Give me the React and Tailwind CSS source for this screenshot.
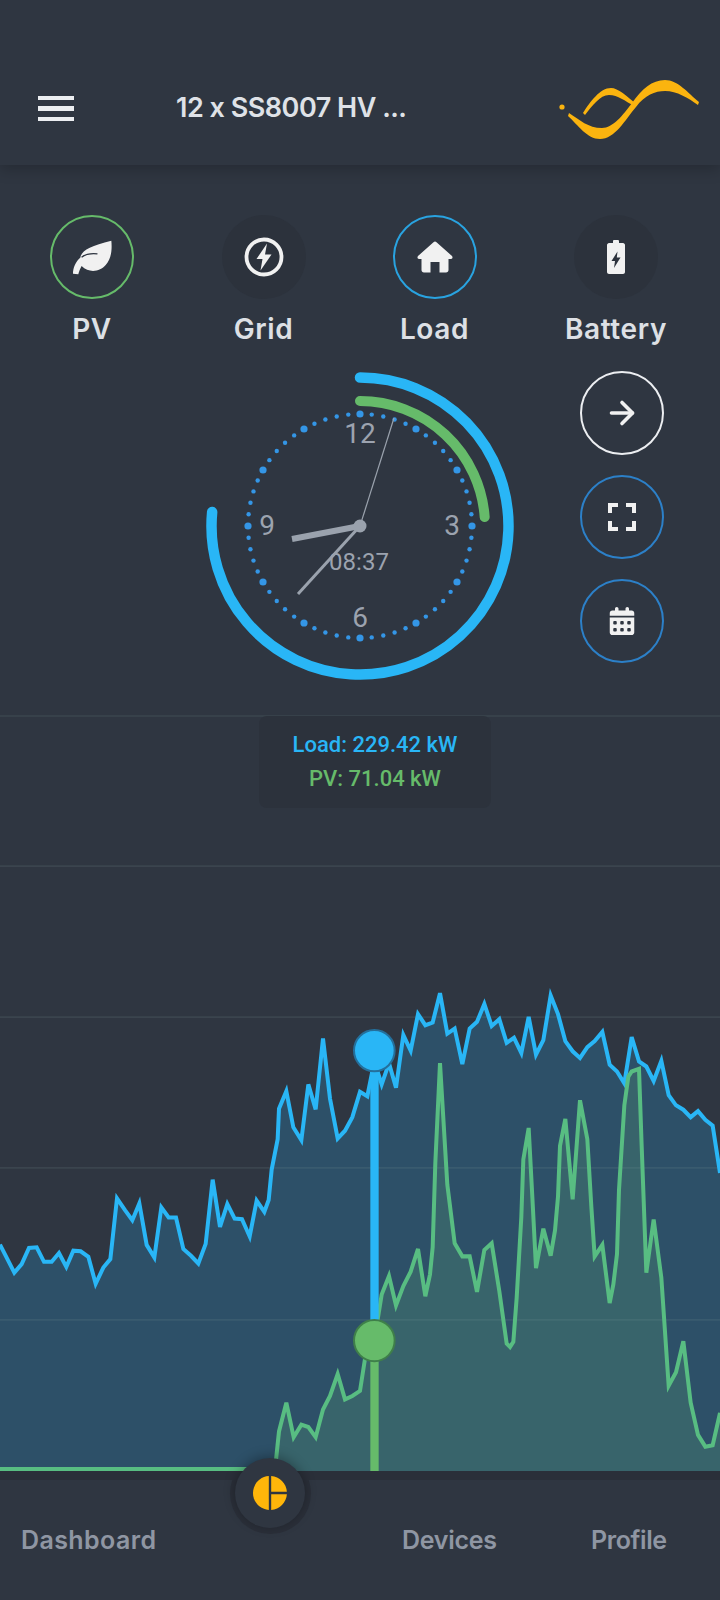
import React from "react";
import { ArrowRight } from "lucide-react";
import { FaCalendarDays } from "react-icons/fa6";

// points read off the reference, chart units are roughly 3x screen px
const blue = [[0,842],[43,925],[65,900],[87,852],[110,850],[132,893],[155,893],[177,867],[199,908],[220,860],[242,862],[265,878],[287,958],[310,910],[331,885],[351,705],[375,740],[397,770],[418,720],[440,843],[463,880],[484,732],[506,762],[528,762],[550,855],[573,875],[595,898],[617,840],[638,650],[660,790],[682,722],[704,765],[726,767],[749,818],[770,712],[793,745],[806,710],[815,620],[833,530],[837,440],[859,388],[880,495],[904,533],[925,368],[947,442],[969,232],[990,410],[1013,528],[1035,505],[1057,465],[1080,390],[1102,403],[1123,300],[1145,368],[1167,305],[1188,378],[1210,222],[1232,268],[1254,160],[1276,193],[1298,185],[1320,98],[1342,218],[1364,203],[1387,308],[1409,203],[1431,183],[1453,130],[1475,195],[1498,175],[1520,245],[1542,230],[1564,275],[1586,168],[1608,280],[1630,237],[1652,105],[1674,160],[1696,240],[1718,270],[1740,290],[1762,258],[1784,240],[1807,213],[1829,310],[1851,330],[1873,365],[1895,228],[1917,300],[1939,315],[1961,358],[1984,298],[2006,400],[2028,430],[2050,443],[2072,465],[2094,447],[2116,473],[2138,490],[2160,630]];

const green = [[0,1506],[825,1506],[829,1470],[837,1395],[859,1310],[881,1412],[904,1375],[925,1382],[947,1412],[969,1330],[990,1290],[1013,1225],[1035,1300],[1057,1290],[1080,1275],[1095,1180],[1123,1125],[1145,990],[1167,935],[1188,1022],[1210,965],[1232,922],[1254,855],[1276,995],[1290,930],[1298,850],[1306,600],[1320,305],[1342,665],[1364,838],[1387,877],[1409,877],[1431,982],[1453,858],[1475,838],[1498,980],[1520,1135],[1530,1145],[1540,1130],[1550,1000],[1564,760],[1570,590],[1586,497],[1598,720],[1608,912],[1630,795],[1652,875],[1665,800],[1674,700],[1680,550],[1696,470],[1718,708],[1740,415],[1762,530],[1774,730],[1784,877],[1807,843],[1829,1015],[1840,960],[1851,870],[1857,680],[1873,430],[1885,345],[1895,330],[1917,322],[1925,550],[1939,925],[1961,768],[1984,940],[2006,1260],[2028,1220],[2050,1128],[2072,1310],[2094,1405],[2116,1440],[2138,1436],[2160,1340]];

const toPoints = (pts) => pts.map((p) => p.join(",")).join(" ");
const toArea = (pts) => `${toPoints(pts)} 2160,1512 0,1512`;

const gridLines = [-722, -278, 169, 615, 1065];
const dots = Array.from({ length: 60 }, (_, i) => i * 6);

function polar(r, deg) {
  const a = (deg * Math.PI) / 180;
  return [360 + r * Math.sin(a), 526 - r * Math.cos(a)];
}

function arc(r, deg) {
  const [x, y] = polar(r, deg);
  return `M 360 ${526 - r} A ${r} ${r} 0 ${deg > 180 ? 1 : 0} 1 ${x} ${y}`;
}

function Clock() {
  return (
    <svg width="320" height="340" viewBox="200 356 320 340" className="block shrink-0">
      <path d={arc(148.5, 275.4)} fill="none" stroke="#29b6f6" strokeWidth="10.5" strokeLinecap="round" />
      <path d={arc(125, 85.9)} fill="none" stroke="#66bb6a" strokeWidth="10" strokeLinecap="round" />
      {dots.map((d) => {
        const [x, y] = polar(112, d);
        return <circle key={d} cx={x} cy={y} r={d % 30 === 0 ? 3.6 : 2.2} fill="#3496e6" />;
      })}
      <g fill="#9ca3af" fontFamily="Roboto, sans-serif" textAnchor="middle">
        <text x="360" y="443" fontSize="28">12</text>
        <text x="452" y="535" fontSize="28">3</text>
        <text x="267" y="535" fontSize="28">9</text>
        <text x="360" y="627" fontSize="28">6</text>
        <text x="359" y="570" fontSize="24">08:37</text>
      </g>
      <line x1="360" y1="526" x2="292" y2="539" stroke="#9aa2ad" strokeWidth="6" />
      <line x1="360" y1="526" x2="298" y2="594" stroke="#9aa2ad" strokeWidth="3" />
      <line x1="360" y1="526" x2="394" y2="418" stroke="#9aa2ad" strokeWidth="1.2" />
      <circle cx="360" cy="526" r="6.5" fill="#9aa2ad" />
    </svg>
  );
}

function Logo() {
  return (
    <svg width="180" height="100" viewBox="0 0 180 100" fill="#fbb40f" className="block">
      <circle cx="22" cy="47" r="2.6" />
      <path d="M29 53 C40 60 48 68 62 68 C73 68 83 55 92 43 C102 29 112 20 125 20 C138 20 148 33 159 42 L158 45 C148 38 137 31 125 31 C115 31 105 35 96 47 C85 60 75 79 60 79 C47 79 38 65 28 56 Z" />
      <path d="M43 53 C50 42 60 28 71 28 C78 28 87 36 96 44 L94 46 C85 41 78 35 69 35 C60 35 52 46 45 55 Z" />
    </svg>
  );
}

function Source({ label, ring, width, children }) {
  return (
    <div className={`flex flex-col items-center ${width}`}>
      <div className={`flex h-[84px] w-[84px] items-center justify-center rounded-full ${ring}`}>{children}</div>
      <div className="mt-[10px] text-[28px] leading-[40px] font-semibold tracking-[0.6px] text-[#dde0e5]">{label}</div>
    </div>
  );
}

function SideButton({ ring, children }) {
  return (
    <div className={`flex h-[84px] w-[84px] items-center justify-center rounded-full border-2 ${ring}`}>{children}</div>
  );
}

export default function App() {
  return (
    <div className="flex h-[1600px] w-[720px] flex-col overflow-hidden bg-[#2f3641] font-['Inter',sans-serif]">
      <header className="relative z-10 flex h-[165px] shrink-0 items-center justify-between bg-[#2f3641] pt-[52px] pl-[38px] shadow-[0_4px_14px_rgba(0,0,0,0.22)]">
        <div className="flex items-center">
          <div className="flex w-[36px] flex-col gap-[6px]">
            <div className="h-[4.5px] bg-[#eceef1]" />
            <div className="h-[4.5px] bg-[#eceef1]" />
            <div className="h-[4.5px] bg-[#eceef1]" />
          </div>
          <div className="ml-[102px] text-[27px] font-semibold tracking-[-0.5px] text-[#dfe2e7]">12 x SS8007 HV ...</div>
        </div>
        <div className="-mb-[2px]">
          <Logo />
        </div>
      </header>

      <div className="flex shrink-0 pt-[50px] pl-[6px]">
        <Source label="PV" width="w-[172px]" ring="border-2 border-[#66bb6a]">
          <svg width="43" height="38" viewBox="60 70 130 115">
            <path d="M182 78 C184 100 184 130 165 152 C148 172 115 178 92 155 C88 162 84 172 82 180 L66 178 C66 160 74 142 88 130 C92 105 120 95 182 78 Z" fill="#f1f1f1" />
            <path d="M92 128 C105 118 122 116 140 118" fill="none" stroke="#2f3641" strokeWidth="4" />
          </svg>
        </Source>
        <Source label="Grid" width="w-[171px]" ring="bg-[#2c323c]">
          <svg width="40" height="40" viewBox="0 0 40 40">
            <circle cx="20" cy="20" r="17.5" fill="none" stroke="#f1f1f1" strokeWidth="3.8" />
            <path d="M23 6.500 L12.500 22 H18.500 L16.500 33.500 L27.500 17.500 H21 Z" fill="#f1f1f1" />
          </svg>
        </Source>
        <Source label="Load" width="w-[171px]" ring="border-2 border-[#29a3e0]">
          <svg width="36" height="32" viewBox="0 0 36 32" fill="#f1f1f1">
            <path d="M16.500 1.200 C17.500 0.400 18.500 0.400 19.500 1.200 L35 15 C36 16.500 35.500 18 34 18 H31.500 V29 C31.500 30.500 30.500 31.500 29 31.500 H22.500 V21 H13.500 V31.500 H7 C5.500 31.500 4.500 30.500 4.500 29 V18 H2 C0.500 18 0 16.500 1 15 Z" />
          </svg>
        </Source>
        <Source label="Battery" width="w-[192px]" ring="bg-[#2c323c]">
          <svg width="18" height="34" viewBox="0 0 18 34">
            <path d="M6 1.200 C6 0.500 6.500 0 7.200 0 H10.800 C11.500 0 12 0.500 12 1.200 V3 H16 C17 3 18 4 18 5 V32 C18 33 17 34 16 34 H2 C1 34 0 33 0 32 V5 C0 4 1 3 2 3 H6 Z" fill="#f1f1f1" />
            <path d="M10.500 11.500 L4.500 21 H8 L7 28 L13.500 17.500 H9.800 Z" fill="#2c323c" />
          </svg>
        </Source>
      </div>

      <div className="mt-[7px] flex h-[359px] shrink-0 pl-[200px]">
        <Clock />
        <div className="ml-[60px] flex flex-col gap-[20px] pt-[15px]">
          <SideButton ring="border-[#eceef1]">
            <ArrowRight size={36} color="#f1f1f1" strokeWidth={2.4} />
          </SideButton>
          <SideButton ring="border-[#2c80c8]">
            <svg width="28" height="28" viewBox="0 0 28 28" fill="none" stroke="#f1f1f1" strokeWidth="4">
              <path d="M2 10 V2 H10 M18 2 H26 V10 M26 18 V26 H18 M10 26 H2 V18" />
            </svg>
          </SideButton>
          <SideButton ring="border-[#2c80c8]">
            <FaCalendarDays size={28} color="#f1f1f1" />
          </SideButton>
        </div>
      </div>

      <div className="relative h-[756px] shrink-0">
        <svg width="720" height="756" viewBox="0 -725 2160 2237" preserveAspectRatio="none" className="block">
          <polygon points={toArea(blue)} fill="#2d5068" />
          <polygon points={toArea(green)} fill="#38646b" />
          {gridLines.map((y) => (
            <line key={y} x1="0" y1={y} x2="2160" y2={y} stroke="#7f9a9a" strokeOpacity="0.15" strokeWidth="5" />
          ))}
          <polyline points={toPoints(blue)} fill="none" stroke="#29b6f6" strokeWidth="12" />
          <polyline points={toPoints(green)} fill="none" stroke="#58bd82" strokeWidth="12" />
          <rect x="1111" y="268" width="25" height="860" fill="#29b6f6" />
          <rect x="1111" y="1128" width="25" height="384" fill="#66bb6a" />
          <circle cx="1123" cy="268" r="61" fill="#29b6f6" stroke="#246f9b" strokeWidth="6" />
          <circle cx="1123" cy="1126" r="61" fill="#66bb6a" stroke="#3f7f4a" strokeWidth="6" />
        </svg>
        <div className="absolute top-[1px] left-[259px] flex h-[92px] w-[232px] flex-col items-center justify-center gap-[10px] rounded-[8px] bg-[#2c323c] font-['Roboto',sans-serif] text-[22px] leading-[24px] font-medium">
          <div className="text-[#29b6f6]">Load: 229.42 kW</div>
          <div className="text-[#66bb6a]">PV: 71.04 kW</div>
        </div>
      </div>

      <footer className="relative flex flex-1 flex-col">
        <div className="h-[9px] shrink-0 bg-[#2a2f39]" />
        <nav className="relative grid flex-1 grid-cols-[381px_189px_1fr] overflow-hidden bg-[#2f3641] pt-[43px] pl-[21px] text-[25px] leading-[34px] font-semibold text-[#8f96a3]">
          <div className="absolute -top-[27px] left-[230px] h-[81px] w-[81px] rounded-full bg-[#2a2f39]" />
          <span className="tracking-[0.4px]">Dashboard</span>
          <span className="tracking-[-0.3px]">Devices</span>
          <span className="tracking-[-0.4px]">Profile</span>
        </nav>
        <div className="absolute -top-[13px] left-[235px] flex h-[70px] w-[70px] items-center justify-center rounded-full bg-[#2f3641] shadow-[0_-2px_12px_rgba(0,0,0,0.3)]">
          <svg width="34" height="34" viewBox="0 0 34 34" fill="#ffb60a">
            <path d="M15.800 0.100 V33.900 C7 33.300 0 26 0 17 C0 8 7 0.700 15.800 0.100 Z" />
            <path d="M18.200 0.100 C26.500 0.700 33.300 7.500 33.900 15.800 H18.200 Z" />
            <path d="M18.200 18.200 H33.900 C33.300 26.500 26.500 33.300 18.200 33.900 Z" />
          </svg>
        </div>
      </footer>
    </div>
  );
}
